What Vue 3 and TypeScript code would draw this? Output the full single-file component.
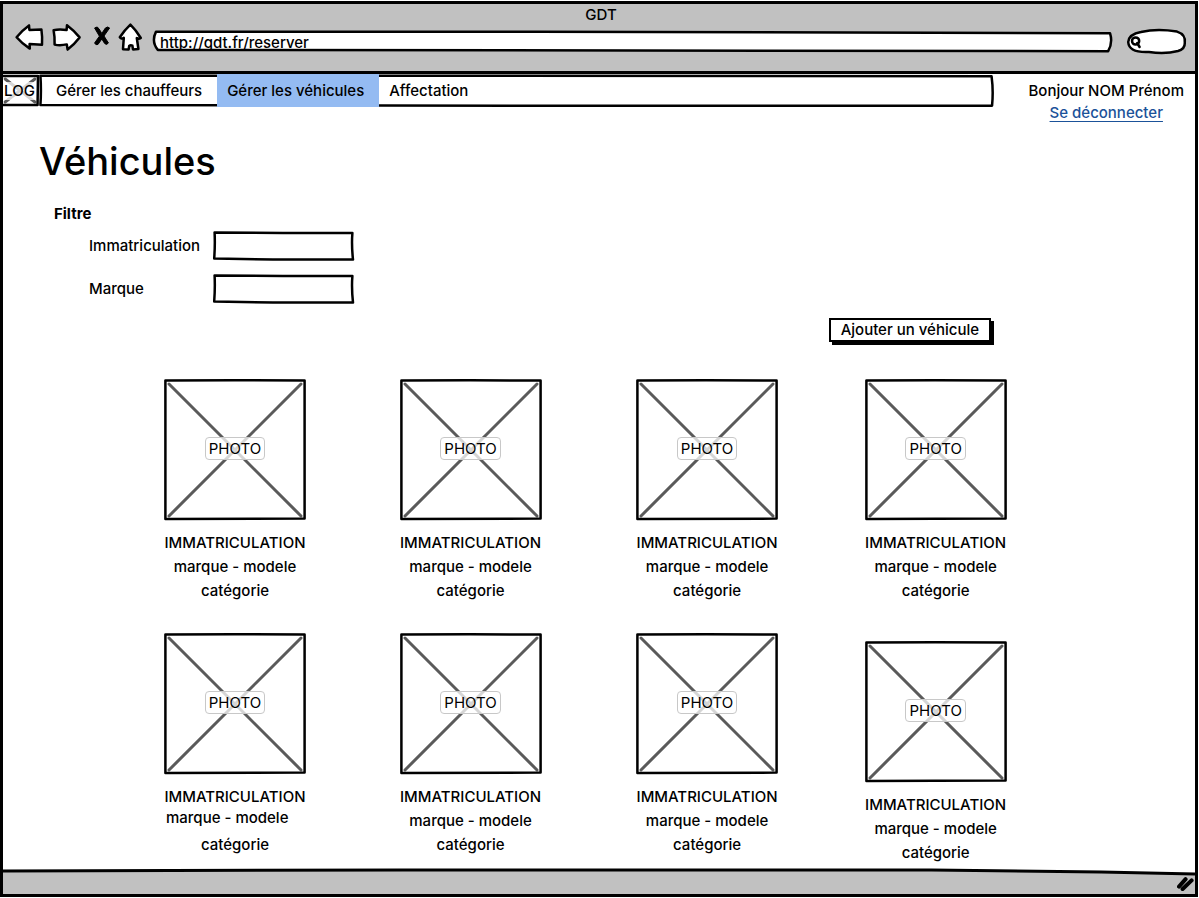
<script setup lang="ts">
import { ref } from 'vue'

interface Vehicle {
  id: number
  plate: string
  model: string
  category: string
  low?: boolean
  startAligned?: boolean
}

const menu = ['Gérer les chauffeurs', 'Gérer les véhicules', 'Affectation']
const active = ref(1)
const url = ref('http://gdt.fr/reserver')
const search = ref('')
const plateFilter = ref('')
const brandFilter = ref('')

const vehicles: Vehicle[] = Array.from({ length: 8 }, (_, i) => ({
  id: i + 1,
  plate: 'IMMATRICULATION',
  model: 'marque - modele',
  category: 'catégorie',
  startAligned: i === 4,
  low: i === 7,
}))
</script>

<template>
  <div class="window">
    <header class="chrome">
      <div class="chrome-title">GDT</div>
      <div class="toolbar">
        <div class="tools">
          <button type="button" class="tool" aria-label="Page précédente">
            <svg width="28" height="30" viewBox="0 0 28 30" class="outline">
              <path d="M1.6 13.2 Q7 6.4 14 1.4 L14.4 6 L26.4 5.4 Q27.4 12 27 20.8 L14.6 20 L14.8 24.6 Q7 19.5 1.6 13.2 Z" />
            </svg>
          </button>
          <button type="button" class="tool tool-forward" aria-label="Page suivante">
            <svg width="29" height="30" viewBox="0 0 29 30" class="outline">
              <path d="M1.6 6.2 Q7 4.8 14.6 6 L15 1.2 Q22 6.4 27.6 13.4 Q22 20.6 15.6 25.6 L14.8 20.4 Q8 21.8 2.6 20.6 Q2.8 12 1.6 6.2 Z" />
            </svg>
          </button>
          <button type="button" class="tool tool-stop" aria-label="Arrêter">
            <svg width="18" height="30" viewBox="0 0 18 30" class="cross">
              <path d="M1.6 4 Q4.4 1.6 6 4.8 L8.8 9.4 L12.4 4 Q14.6 2 16.6 4 L11 12 L15.4 19 Q13.6 21.6 11.6 19.4 L8.8 15 L5 20.4 Q2.6 21.6 1.6 19 L6.4 12.2 Z" />
            </svg>
          </button>
          <button type="button" class="tool tool-home" aria-label="Accueil">
            <svg width="24" height="30" viewBox="0 0 24 30" class="outline">
              <path d="M11.4 0.6 Q17 6 21.8 14 Q19.6 15.4 17.8 14 L19.4 25 L14 25.4 L13.4 21.6 Q11.6 20.6 10.2 22 L9.6 25.6 L4 25.2 L4.8 13.8 Q2 15.4 0.8 13.2 Q5.6 6 11.4 0.6 Z" />
            </svg>
          </button>
        </div>
        <label class="address">
          <svg class="frame" viewBox="0 0 100 100" preserveAspectRatio="none" aria-hidden="true">
            <path d="M0.2 4 L40 3 L99.8 11 Q100.1 55 99.6 96 L50 93 L0.4 90 Q-0.3 50 0.2 4 Z" />
          </svg>
          <input v-model="url" type="text" class="address-input" aria-label="Adresse" />
        </label>
        <label class="search">
          <svg class="frame" viewBox="0 0 60 25" preserveAspectRatio="none" aria-hidden="true">
            <path d="M14 3 Q30 -0.6 50 2.6 Q59 5.5 57.8 14 Q58 20 51 22 Q38 25.4 22 23 Q2 24 1.2 13 Q2 5 14 3 Z" />
            <circle cx="8.6" cy="12" r="3.6" />
            <path d="M10.2 14 L12.6 18" />
          </svg>
          <input v-model="search" type="text" class="search-input" aria-label="Rechercher" />
        </label>
      </div>
    </header>

    <div class="topbar">
      <div class="logo">
        <svg class="frame" viewBox="0 0 38 33" preserveAspectRatio="none" aria-hidden="true">
          <path class="strike" d="M5 5 L34 28 M34 5 L5 28" />
          <path d="M1.6 2 L37 2 L36.6 31 L1.6 31 Z" />
        </svg>
        <span>LOG</span>
      </div>
      <nav class="menu" aria-label="Menu principal">
        <svg class="frame" viewBox="0 0 100 100" preserveAspectRatio="none" aria-hidden="true">
          <path d="M0.15 5 L50 5 L99.8 7 Q100 50 99.85 96 L50 96 L0.15 94 Q0.25 50 0.15 5 Z" />
        </svg>
        <a
          v-for="(item, i) in menu"
          :key="item"
          href="#"
          class="menu-item"
          :class="{ active: active === i }"
          :aria-current="active === i ? 'page' : undefined"
          @click.prevent="active = i"
        >{{ item }}</a>
      </nav>
      <div class="user">
        <span>Bonjour NOM Prénom</span>
        <a href="#" @click.prevent>Se déconnecter</a>
      </div>
    </div>

    <main class="content">
      <h1>Véhicules</h1>
      <form class="filter" @submit.prevent>
        <h2>Filtre</h2>
        <div class="field">
          <label for="plate">Immatriculation</label>
          <div class="box">
            <svg class="frame" viewBox="0 0 141 30" preserveAspectRatio="none" aria-hidden="true">
              <path d="M1.6 1.4 L70 2 L139.4 2 Q138.4 14 140 28.6 L60 28.6 L1.2 27.4 Q2.2 14 1.6 1.4 Z" />
            </svg>
            <input id="plate" v-model="plateFilter" type="text" />
          </div>
        </div>
        <div class="field">
          <label for="brand">Marque</label>
          <div class="box">
            <svg class="frame" viewBox="0 0 141 30" preserveAspectRatio="none" aria-hidden="true">
              <path d="M1.6 1.4 L70 2 L139.4 2 Q138.4 14 140 28.6 L60 28.6 L1.2 27.4 Q2.2 14 1.6 1.4 Z" />
            </svg>
            <input id="brand" v-model="brandFilter" type="text" />
          </div>
        </div>
      </form>

      <div class="actions">
        <button type="button" class="add">Ajouter un véhicule</button>
      </div>

      <ul class="vehicles">
        <li v-for="v in vehicles" :key="v.id" class="vehicle" :class="{ low: v.low }">
          <div class="photo">
            <svg class="frame" viewBox="0 0 142 142" aria-hidden="true">
              <path class="strike" d="M5 5 L137 137 M137 5 L5 137" />
              <path d="M1.4 1.6 L70 1.2 L140.6 1.6 L140.6 139.6 L1.4 140 Z" />
            </svg>
            <span>PHOTO</span>
          </div>
          <p>{{ v.plate }}</p>
          <p :class="{ start: v.startAligned }">{{ v.model }}</p>
          <p>{{ v.category }}</p>
        </li>
      </ul>
    </main>

    <footer class="status">
      <svg class="edge" viewBox="0 0 1194 8" preserveAspectRatio="none" aria-hidden="true">
        <path class="page-fill" d="M0 0 H1194 V6 L1100 4 L930 2 L400 2 L0 3 Z" />
        <path d="M0 3 L400 2 L930 2 L1100 4 L1194 6" />
      </svg>
      <svg class="grip" width="18" height="16" viewBox="0 0 18 16" aria-hidden="true">
        <path d="M2 10.6 L8.6 3.2 M5.6 13 L14.6 4.4" />
      </svg>
    </footer>
  </div>
</template>

<style>
body {
  background: #fff;
}
</style>

<style scoped>
.window,
.window * {
  box-sizing: border-box;
}

.window {
  display: flex;
  flex-direction: column;
  min-height: calc(100vh - 2px);
  margin: 1px 1px 1px 0;
  border: 3px solid #000;
  background: #fff;
  color: #000;
  font-family: Inter, "Liberation Sans", sans-serif;
  font-size: 15px;
  font-weight: 500;
  line-height: 24px;
}

input,
button {
  color: inherit;
  font: inherit;
}

a {
  color: inherit;
  text-decoration: none;
}

.frame {
  position: absolute;
  inset: 0;
  width: 100%;
  height: 100%;
  overflow: visible;
  pointer-events: none;
}

.frame path,
.frame circle {
  fill: none;
  stroke: #000;
  stroke-width: 2.5;
  stroke-linejoin: round;
  stroke-linecap: round;
  vector-effect: non-scaling-stroke;
}

.frame .strike {
  stroke: #5a5a5a;
  stroke-width: 3;
}

.chrome {
  padding: 2px 8px 17px 12px;
  border-bottom: 3px solid #000;
  background: #c1c1c1;
}

.chrome-title {
  line-height: 18px;
  text-align: center;
}

.toolbar {
  display: flex;
  align-items: center;
  height: 30px;
}

.tools {
  display: flex;
  width: 139px;
}

.tool {
  display: flex;
  margin: 0;
  padding: 0;
  border: 0;
  background: none;
}

.tool-forward {
  margin-left: 9px;
}

.tool-stop {
  margin-left: 12px;
}

.tool-home {
  margin-left: 8px;
}

.outline {
  overflow: visible;
  fill: #fff;
  stroke: #000;
  stroke-width: 2.5;
  stroke-linejoin: round;
}

.cross {
  fill: #000;
  stroke: #000;
  stroke-width: 1;
  stroke-linejoin: round;
}

.address,
.search,
.box {
  position: relative;
  display: block;
}

.address {
  flex: 1;
  height: 21px;
  margin-top: 4px;
}

.address .frame path {
  fill: #fff;
}

.address-input {
  position: relative;
  display: block;
  width: 100%;
  height: 19px;
  padding: 4px 6px 0;
  border: 0;
  outline: 0;
  background: none;
  line-height: 18px;
}

.search {
  width: 60px;
  height: 25px;
  margin-left: 15px;
  margin-top: 4px;
}

.search .frame path:first-child {
  fill: #fff;
}

.search-input {
  position: relative;
  width: 100%;
  height: 100%;
  padding: 0 8px 0 18px;
  border: 0;
  outline: 0;
  background: none;
}

.topbar {
  display: flex;
  align-items: flex-start;
  margin-left: -3px;
}

.logo {
  position: relative;
  flex: none;
  display: flex;
  align-items: center;
  justify-content: center;
  width: 39px;
  height: 33px;
}

.logo span {
  position: relative;
  background: rgba(255, 255, 255, 0.75);
  line-height: 18px;
}

.menu {
  position: relative;
  flex: 1;
  display: flex;
  height: 33px;
  padding-left: 7px;
}

.menu-item {
  position: relative;
  padding: 0 15px 0 10px;
  line-height: 33px;
  white-space: nowrap;
}

.menu-item.active {
  background: #94bbf2;
}

.user {
  flex: none;
  display: flex;
  flex-direction: column;
  align-items: center;
  padding: 6px 11px 0 35px;
  line-height: 22px;
}

.user a {
  color: #1b5299;
  text-decoration: underline;
  text-underline-offset: 3px;
}

.content {
  flex: 1;
}

h1 {
  margin: 5px 0 0 36px;
  font-size: 38px;
  font-weight: 500;
  line-height: 64px;
}

.filter {
  margin-left: 51px;
}

h2 {
  margin: 9px 0 5px;
  font-size: 15px;
  font-weight: 700;
  line-height: 24px;
}

.field {
  display: flex;
  align-items: center;
  margin: 0 0 13px 35px;
}

.field label {
  width: 124px;
}

.box {
  width: 141px;
  height: 30px;
}

.box input {
  width: 100%;
  height: 100%;
  padding: 0 8px;
  border: 0;
  outline: 0;
  background: none;
}

.actions {
  display: flex;
  justify-content: flex-end;
  padding: 1px 204px 0 0;
}

.add {
  height: 24px;
  padding: 0 10px;
  border: 2px solid #000;
  background: #fff;
  box-shadow: 3px 3px 0 #000;
  line-height: 20px;
}

.vehicles {
  display: grid;
  grid-template-columns: 236fr 237fr 229fr 331fr;
  row-gap: 30px;
  margin: 37px 0 0;
  padding: 0 0 0 161px;
  list-style: none;
}

.vehicle {
  width: 142px;
  height: 224px;
}

.vehicle.low {
  padding-top: 8px;
}

.vehicle p {
  margin: 0;
  text-align: center;
}

.vehicle .start {
  padding: 0 0 6px 2px;
  line-height: 18px;
  text-align: left;
}

.photo {
  position: relative;
  display: flex;
  align-items: center;
  justify-content: center;
  height: 142px;
  margin-bottom: 10px;
  padding-bottom: 3px;
}

.photo span {
  position: relative;
  padding: 0 3px;
  border: 1px solid #c8c8c8;
  border-radius: 4px;
  background: rgba(255, 255, 255, 0.75);
  font-weight: 400;
  line-height: 21px;
}

.status {
  display: flex;
  align-items: center;
  justify-content: flex-end;
  position: relative;
  height: 26px;
  background: #c1c1c1;
}

.edge {
  position: absolute;
  top: 0;
  left: 0;
  width: 100%;
  height: 8px;
}

.edge path {
  fill: none;
  stroke: #000;
  stroke-width: 3;
}

.edge .page-fill {
  fill: #fff;
  stroke: none;
}

.grip {
  margin-top: 5px;
  fill: none;
  stroke: #000;
  stroke-width: 4;
  stroke-linecap: round;
}
</style>
